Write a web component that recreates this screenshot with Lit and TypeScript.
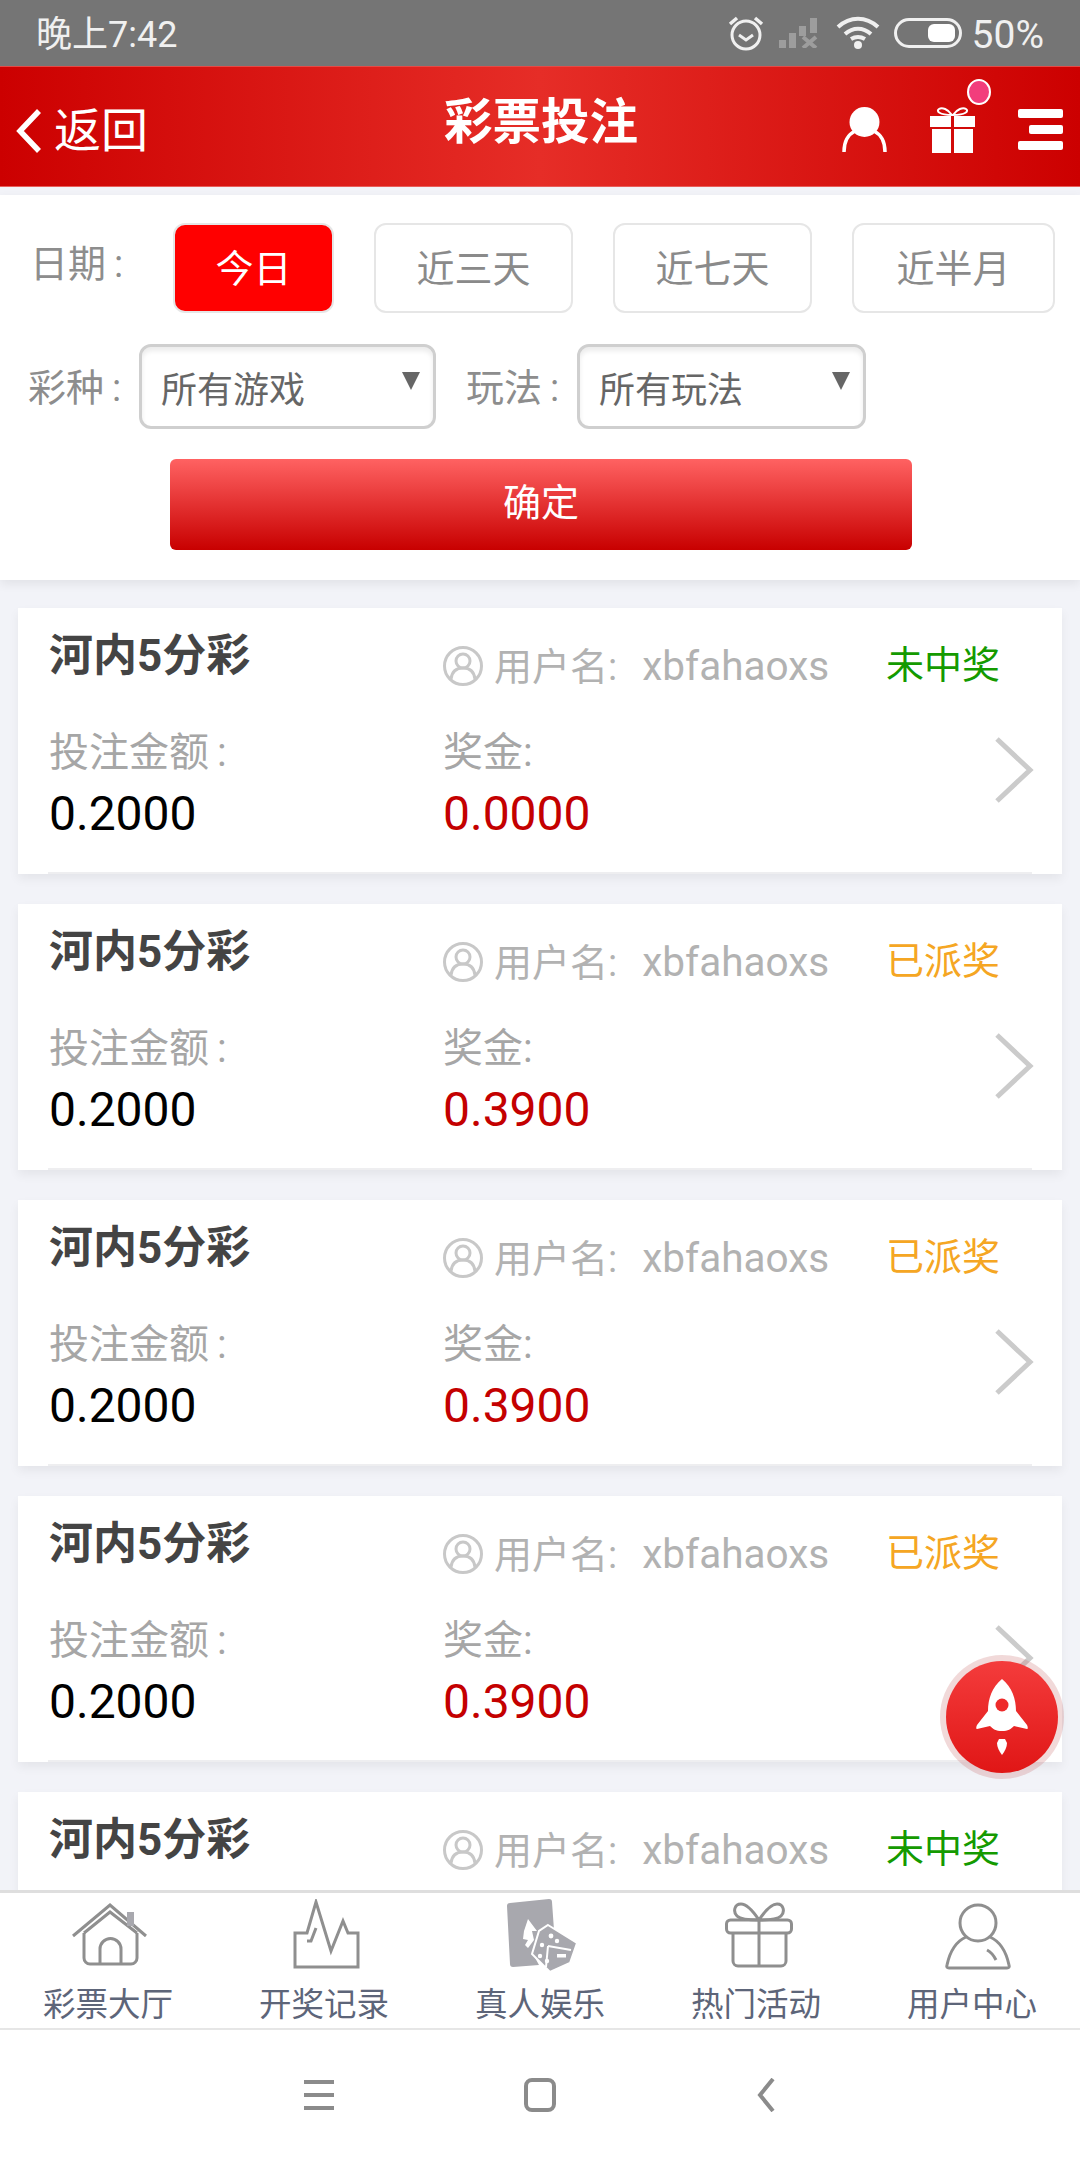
import { LitElement, html, css, svg } from "lit";
import { customElement } from "lit/decorators.js";

type Order = { status: string; done: boolean; prize: string; partial?: boolean };
const ORDERS: Order[] = [
  { status: "未中奖", done: false, prize: "0.0000" },
  { status: "已派奖", done: true, prize: "0.3900" },
  { status: "已派奖", done: true, prize: "0.3900" },
  { status: "已派奖", done: true, prize: "0.3900" },
  { status: "未中奖", done: false, prize: "0.0000", partial: true },
];

const TABS = [
  { label: "彩票大厅", icon: svg`<path d="M4 37 41 6l36 31" /><path d="M15 34 41 13l27 21" /><path d="M15 34v25a6 6 0 0 0 6 6h41a6 6 0 0 0 6-6V34" /><path d="M31 65V50a10 10 0 0 1 21 0v15" /><rect class="fill" x="58" y="13" width="7" height="14" />` },
  { label: "开奖记录", icon: svg`<path d="M10 68V34h12l9-31 15 49 12-30 5 12h10v34Z" /><path d="M22 42h4l5-13" />` },
  { label: "真人娱乐", icon: svg`<path class="fill" d="M9 4 48 0q3 0 3 3l2 28-12 6-9 18 6 11-26 2q-3 0-3-3L6 7q0-3 3-3Z" /><path class="knock" d="M27 20 36 32h-5l2 9-6 8-3-3 3-5-5-1 1-8Z" /><path class="fill dice" d="M47 26 76 44 69 64 49 73 31 55 38 32Z" /><path class="pip" d="M47 47 70 51M47 47 45 68" /><circle class="dot" cx="50" cy="37" r="2.4" /><circle class="dot" cx="41" cy="46" r="2.2" /><circle class="dot" cx="39" cy="57" r="2.2" /><circle class="dot" cx="46" cy="62" r="2.2" /><rect class="dot" x="56" y="55" width="9" height="3.5" /><circle class="dot" cx="56" cy="42" r="2.2" />` },
  { label: "热门活动", icon: svg`<rect x="9.5" y="21" width="65" height="13" rx="4" /><path d="M16 34v28a5 5 0 0 0 5 5h43a5 5 0 0 0 5-5V34" /><path d="M42 21v46" /><path d="M42 21C36 12 30 5 24 5c-7 0-8 8-4 12 3 3 12 4 22 4Zm0 0C48 12 54 5 60 5c7 0 8 8 4 12-3 3-12 4-22 4Z" />` },
  { label: "用户中心", icon: svg`<circle cx="45" cy="24" r="18" /><path d="M33 38C24 42 17 52 14 66q-1 3 2 3h58q3 0 2-3C73 52 66 42 57 38" /><path d="M54 51c4 2 7 6 9 10" />` },
];

@customElement("order-card")
class OrderCard extends LitElement {
  static properties = { order: { attribute: false } };
  order!: Order;
  static styles = css`
    :host { display: flex; height: 266px; flex: none; background: #fff; box-shadow: 0 5px 10px rgba(0,0,0,.06); position: relative; padding-left: 31px; box-sizing: border-box; }
    .rule { position: absolute; left: 30px; right: 30px; bottom: 0; height: 2px; background: #eeeef0; }
    .content { flex: 1; min-width: 0; }
    .top { display: flex; height: 123px; }
    .title { flex: none; width: 393px; margin-top: 26px; font-size: 44px; line-height: 44px; font-weight: 700; color: #444; white-space: nowrap; }
    .user { flex: none; width: 444px; margin-top: 37px; height: 42px; display: flex; align-items: center; gap: 10px; font-size: 38px; line-height: 44px; color: #b2b2b2; white-space: nowrap; }
    .user svg { flex: none; width: 42px; height: 42px; fill: none; stroke: #c8c8c8; stroke-width: 3; }
    .name { font-size: 40.5px; margin-left: 15px; }
    .status { flex: none; margin-top: 35px; font-size: 38px; line-height: 44px; white-space: nowrap; }
    .status.lost { color: #149a00; }
    .status.paid { color: #f5a623; }
    .bottom { display: flex; }
    .col { width: 394px; }
    .label { font-size: 40px; line-height: 44px; color: #a6a6a6; white-space: nowrap; }
    .label i { font-style: normal; margin-left: 8px; }
    .value { margin-top: 9px; font-size: 48px; line-height: 60px; color: #000; }
    .value.prize { color: #c40000; }
    .chev { flex: none; width: 40px; height: 68px; margin: 128px 28px 0 0; fill: none; stroke: #cbcbcb; stroke-width: 5; }
  `;
  render() {
    const o = this.order;
    return html`
      <div class="content">
        <div class="top">
          <div class="title">河内5分彩</div>
          <div class="user">
            <svg viewBox="0 0 42 42"><circle cx="21" cy="21" r="18.5" /><circle cx="21" cy="16" r="7" /><path d="M9 34c1-8 6-11 12-11s11 3 12 11" /></svg>
            <span>用户名:<span class="name"> xbfahaoxs</span></span>
          </div>
          <div class="status ${o.done ? "paid" : "lost"}">${o.status}</div>
        </div>
        ${o.partial ? "" : html`
          <div class="bottom">
            <div class="col"><div class="label">投注金额<i>:</i></div><div class="value">0.2000</div></div>
            <div class="col"><div class="label">奖金:</div><div class="value prize">${o.prize}</div></div>
          </div>`}
      </div>
      ${o.partial ? "" : html`
        <svg class="chev" viewBox="0 0 40 68"><path d="M3 3 36 34 3 65" /></svg>
        <div class="rule"></div>`}
    `;
  }
}

@customElement("app-root")
class AppRoot extends LitElement {
  static styles = css`
    :host { display: flex; flex-direction: column; position: relative; width: 1080px; height: 2160px; overflow: hidden; background: #fff; font-family: Roboto, "Noto Sans CJK SC", sans-serif; }
    .status-bar { flex: none; height: 66px; background: #757575; color: #f0f0f0; display: flex; align-items: center; padding: 0 36px; box-sizing: border-box; }
    .clock { flex: 1; font-size: 36px; line-height: 40px; margin-top: 3px; }
    .status-bar svg { flex: none; fill: none; stroke: #f0f0f0; }
    .alarm { width: 36px; height: 36px; stroke-width: 3; margin-right: 15px; }
    .signal { width: 42px; height: 30px; margin-right: 15px; }
    .signal rect { fill: #9d9d9d; stroke: none; }
    .signal path { stroke: #9d9d9d; stroke-width: 4; }
    .wifi { width: 44px; height: 34px; margin-right: 14px; stroke-width: 4; }
    .wifi .solid { fill: #f0f0f0; stroke: none; }
    .battery { width: 68px; height: 30px; margin-right: 10px; stroke-width: 3; }
    .battery rect.level { fill: #fff; stroke: none; }
    .pct { font-size: 39px; line-height: 40px; margin-top: 3px; }

    header { flex: none; height: 121px; display: grid; grid-template-columns: 1fr auto 1fr; align-items: center; background: linear-gradient(90deg, #cc0000, #e62d27 50%, #cc0000); color: #fff; box-sizing: border-box; border-top: 1px solid #e54a46; border-bottom: 1px solid #e85e5a; }
    .back { display: flex; align-items: center; gap: 11px; padding-left: 15px; margin-top: 8px; font-size: 47px; line-height: 50px; }
    .back svg { width: 28px; height: 46px; fill: none; stroke: #fff; stroke-width: 5.5; }
    h1 { margin: 0 0 8px 2px; font-size: 48.5px; line-height: 52px; font-weight: 700; }
    .actions { display: flex; justify-content: flex-end; align-items: center; gap: 43px; padding-right: 17px; margin-top: 6px; }
    .actions svg { display: block; width: 45px; height: 46px; fill: #fff; }
    .gift { position: relative; }
    .badge { position: absolute; left: 37px; top: -28px; width: 20px; height: 22px; border-radius: 50%; background: #f23d7c; border: 2px solid #fff; }

    main { flex: 1; min-height: 0; overflow: hidden; background: #f2f3f8; padding-top: 8px; }
    .filters { height: 385px; box-sizing: border-box; background: #fff; box-shadow: 0 4px 10px rgba(0,0,0,.07); display: flex; flex-direction: column; padding-top: 28px; }
    .row { display: flex; align-items: center; }
    .row.dates { height: 90px; padding-left: 30px; }
    .lbl { font-size: 38px; line-height: 44px; color: #8d8d8d; white-space: nowrap; }
    .lbl i { font-style: normal; margin-left: 8px; }
    .dates .lbl { width: 143px; margin-bottom: 8px; }
    .chip { flex: none; box-sizing: border-box; width: 199px; height: 90px; margin-right: 40px; border: 2px solid #e6e6e6; border-radius: 12px; display: flex; align-items: center; justify-content: center; padding-bottom: 5px; font-size: 38px; color: #8a8a8a; background: #fff; }
    .chip.on { width: 161px; margin-right: 40px; background: #ff0000; color: #fff; }
    .chip.last { width: 203px; margin-right: 0; }
    .row.selects { height: 86px; margin-top: 30px; padding-left: 28px; }
    .selects .lbl { width: 111px; margin-top: 4px; }
    .selects .lbl.second { width: 111px; margin-left: 30px; }
    .select { flex: none; box-sizing: border-box; height: 85px; border: 3px solid #cfcfcf; border-radius: 12px; box-shadow: inset 0 4px 5px rgba(0,0,0,.08); display: flex; align-items: center; justify-content: space-between; padding: 2px 13px 0 19px; font-size: 36px; color: #666; }
    .select.a { width: 297px; }
    .select.b { width: 289px; }
    .caret { width: 0; height: 0; border: 9px solid transparent; border-top: 18px solid #666; border-bottom: 0; margin-bottom: 12px; }
    .ok { flex: none; align-self: flex-start; box-sizing: border-box; margin: 30px 0 0 170px; width: 742px; height: 91px; border-radius: 6px; background: linear-gradient(180deg, #ff6262, #c80000); color: #fff; font-size: 38px; display: flex; align-items: center; justify-content: center; padding-bottom: 11px; }
    .list { display: flex; flex-direction: column; gap: 30px; padding: 28px 18px 0; }

    nav.tabs { flex: none; height: 140px; box-sizing: border-box; display: grid; grid-template-columns: repeat(5, 1fr); background: #fff; border-top: 3px solid #dedede; border-bottom: 2px solid #e6e6e6; padding-top: 6px; }
    .tab { display: flex; flex-direction: column; align-items: center; }
    .tab svg { width: 84px; height: 76px; margin-left: 6px; fill: none; stroke: #8f8f8f; stroke-width: 3; flex: none; }
    .tab .fill { fill: #a8a8ae; stroke: none; }
    .tab .fill.dice { stroke: #fff; stroke-width: 2; }
    .tab .knock { fill: #fff; stroke: none; }
    .tab .pip { stroke: #fff; stroke-width: 2; }
    .tab .dot { fill: #fff; stroke: none; }
    .tab span { font-size: 32.5px; line-height: 40px; margin-top: 10px; color: #5d6579; white-space: nowrap; }

    .sys { flex: none; height: 130px; background: #fff; display: flex; align-items: center; justify-content: center; box-sizing: border-box; padding-left: 6px; }
    .sys svg { width: 32px; height: 34px; fill: none; stroke: #8b8b8b; stroke-width: 4; }
    .sys .mid { margin: 0 195px 0 189px; }

    .rocket { position: absolute; left: 940px; top: 1655px; width: 124px; height: 124px; border-radius: 50%; background: rgba(205,120,120,.28); display: flex; align-items: center; justify-content: center; }
    .rocket div { width: 112px; height: 112px; border-radius: 50%; background: linear-gradient(180deg, #f43c3c, #e01616); display: flex; align-items: center; justify-content: center; }
    .rocket svg { width: 52px; height: 76px; }
    .rocket .body { fill: #fff; }
    .rocket .port { fill: #ee2a2a; }
  `;

  render() {
    return html`
      <div class="status-bar">
        <div class="clock">晚上7:42</div>
        <svg class="alarm" viewBox="0 0 36 36"><circle cx="18" cy="20" r="14" /><path d="M11 20l7 5 7-5" /><path d="M2 9 9 3M34 9l-7-6" stroke-width="3.5" /></svg>
        <svg class="signal" viewBox="0 0 42 30"><rect x="0" y="22" width="7" height="8" /><rect x="10" y="15" width="7" height="15" /><rect x="20" y="8" width="7" height="10" /><rect x="31" y="0" width="7" height="15" /><path d="M24 19l13 11M37 19 24 30" /></svg>
        <svg class="wifi" viewBox="0 0 44 34"><path d="M2 11C14 0 30 0 42 11" /><path d="M9 18c8-7 18-7 26 0" /><path d="M15 23c5-3 9-3 14 0" /><circle class="solid" cx="22" cy="29" r="4" /></svg>
        <svg class="battery" viewBox="0 0 68 30"><rect x="1.5" y="1.5" width="65" height="27" rx="13.5" /><rect class="level" x="34" y="6" width="27" height="18" rx="6" /></svg>
        <div class="pct">50%</div>
      </div>

      <header>
        <div class="back">
          <svg viewBox="0 0 28 46"><path d="M24 3 5 23l19 20" /></svg>
          <span>返回</span>
        </div>
        <h1>彩票投注</h1>
        <div class="actions">
          <svg viewBox="0 0 45 46"><circle cx="22.5" cy="15" r="15" /><path d="M2 45c0-12 5-18 11-21" fill="none" stroke="#fff" stroke-width="3.5" /><path d="M43 45c0-12-5-18-11-21" fill="none" stroke="#fff" stroke-width="3.5" /></svg>
          <div class="gift">
            <svg viewBox="0 0 45 46"><rect x="0" y="9" width="21" height="11" /><rect x="24" y="9" width="21" height="11" /><rect x="2" y="22" width="19" height="24" /><rect x="24" y="22" width="19" height="24" /><path d="M22 8C18 2 12 0 9 2s0 6 13 6Zm1 0c4-6 10-8 13-6s0 6-13 6Z" fill="none" stroke="#fff" stroke-width="2" /></svg>
            <div class="badge"></div>
          </div>
          <svg viewBox="0 0 45 46"><rect x="0" y="2" width="45" height="9" rx="2" /><rect x="11" y="18" width="34" height="9" rx="2" /><rect x="0" y="34" width="45" height="9" rx="2" /></svg>
        </div>
      </header>

      <main>
        <section class="filters">
          <div class="row dates">
            <div class="lbl">日期<i>:</i></div>
            <div class="chip on">今日</div>
            <div class="chip">近三天</div>
            <div class="chip">近七天</div>
            <div class="chip last">近半月</div>
          </div>
          <div class="row selects">
            <div class="lbl">彩种<i>:</i></div>
            <div class="select a">所有游戏<i class="caret"></i></div>
            <div class="lbl second">玩法<i>:</i></div>
            <div class="select b">所有玩法<i class="caret"></i></div>
          </div>
          <div class="ok">确定</div>
        </section>
        <div class="list">
          ${ORDERS.map((o) => html`<order-card .order=${o}></order-card>`)}
        </div>
      </main>

      <nav class="tabs">
        ${TABS.map((t) => html`<div class="tab"><svg viewBox="0 0 84 76">${t.icon}</svg><span>${t.label}</span></div>`)}
      </nav>

      <div class="sys">
        <svg viewBox="0 0 32 34"><path d="M1 4h30M1 17h30M1 30h30" /></svg>
        <svg class="mid" viewBox="0 0 32 34"><rect x="2" y="2" width="28" height="30" rx="6" /></svg>
        <svg viewBox="0 0 32 34"><path d="M22 1 9 17l13 16" /></svg>
      </div>

      <div class="rocket"><div>
        <svg viewBox="0 0 52 76"><path class="body" d="M26 0C36 8 40 20 40 32l11 14c1 2 1 4 0 4l-13-3c-3 3-6 5-12 5s-9-2-12-5L1 50c-1 0-1-2 0-4l11-14C12 20 16 8 26 0Z" /><circle class="port" cx="26" cy="26" r="6.5" /><path class="body" d="M26 76c-3-4-5-8-5-12l2-4h6l2 4c0 4-2 8-5 12Z" /></svg>
      </div></div>
    `;
  }
}

declare global { interface HTMLElementTagNameMap { "app-root": AppRoot; "order-card": OrderCard; } }
